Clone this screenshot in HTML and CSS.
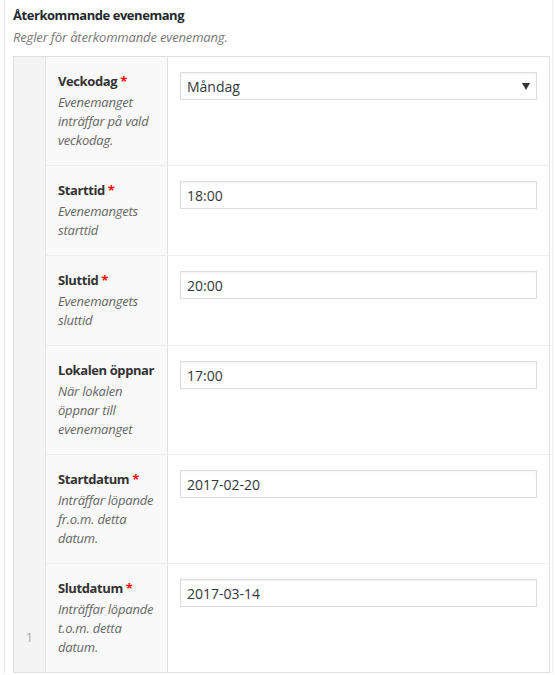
FILE: index.html
```html
<!DOCTYPE html>
<html lang="sv">
<head>
    <meta charset="UTF-8">
    <meta name="viewport" content="width=device-width, initial-scale=1.0">
    <title>Återkommande evenemang</title>
    <link rel="stylesheet" href="styles.css">
</head>
<body>
    <div class="panel">
        <h3 class="panel-title">Återkommande evenemang</h3>
        <p class="panel-desc">Regler för återkommande evenemang.</p>

        <div class="repeater">
            <div class="row-order">1</div>
            <div class="row-fields">
                <div class="field">
                    <div class="field-label">
                        <label>Veckodag <span class="required">*</span></label>
                        <p class="field-desc">Evenemanget inträffar på vald veckodag.</p>
                    </div>
                    <div class="field-input">
                        <div class="select-box">
                            <select>
                                <option>Måndag</option>
                                <option>Tisdag</option>
                                <option>Onsdag</option>
                                <option>Torsdag</option>
                                <option>Fredag</option>
                                <option>Lördag</option>
                                <option>Söndag</option>
                            </select>
                            <span class="caret"></span>
                        </div>
                    </div>
                </div>

                <div class="field">
                    <div class="field-label">
                        <label>Starttid <span class="required">*</span></label>
                        <p class="field-desc">Evenemangets starttid</p>
                    </div>
                    <div class="field-input">
                        <input type="text" value="18:00">
                    </div>
                </div>

                <div class="field">
                    <div class="field-label">
                        <label>Sluttid <span class="required">*</span></label>
                        <p class="field-desc">Evenemangets sluttid</p>
                    </div>
                    <div class="field-input">
                        <input type="text" value="20:00">
                    </div>
                </div>

                <div class="field">
                    <div class="field-label">
                        <label>Lokalen öppnar</label>
                        <p class="field-desc">När lokalen öppnar till evenemanget</p>
                    </div>
                    <div class="field-input">
                        <input type="text" value="17:00">
                    </div>
                </div>

                <div class="field">
                    <div class="field-label">
                        <label>Startdatum <span class="required">*</span></label>
                        <p class="field-desc">Inträffar löpande fr.o.m. detta datum.</p>
                    </div>
                    <div class="field-input">
                        <input type="text" value="2017-02-20">
                    </div>
                </div>

                <div class="field">
                    <div class="field-label">
                        <label>Slutdatum <span class="required">*</span></label>
                        <p class="field-desc">Inträffar löpande t.o.m. detta datum.</p>
                    </div>
                    <div class="field-input">
                        <input type="text" value="2017-03-14">
                    </div>
                </div>
            </div>
        </div>
    </div>
</body>
</html>
```

FILE: styles.css
```css
body {
    margin: 0;
    background-color: #fff;
    font-family: 'Open Sans', 'Liberation Sans', sans-serif;
    font-size: 13px;
    color: #444;
}
.panel {
    margin-left: 4px;
    width: 537px;
    padding: 6px 2px 0 8px;
    border-left: 1px solid #e5e5e5;
    border-right: 1px solid #eee;
}
.panel-title {
    margin: 0;
    font-size: 13px;
    line-height: 18px;
    font-weight: 700;
    letter-spacing: -0.45px;
    color: #23282d;
}
.panel-desc {
    margin: 4px 0 10px;
    line-height: 18px;
    font-style: italic;
    letter-spacing: -0.15px;
    color: #777;
}
.repeater {
    display: grid;
    grid-template-columns: 32px 1fr;
    border: 1px solid #dfdfdf;
}
.row-order {
    display: flex;
    align-items: flex-end;
    justify-content: center;
    padding-bottom: 26px;
    background-color: #f4f4f4;
    border-right: 1px solid #e1e1e1;
    color: #aaa;
    font-size: 13px;
    line-height: 18px;
}
.field {
    display: grid;
    grid-template-columns: 122px 1fr;
    border-top: 1px solid #eee;
}
.field:first-child {
    border-top: none;
}
.field-label {
    padding: 15px 10px 15px 12px;
    background-color: #f9f9f9;
    border-right: 1px solid #e1e1e1;
}
.field-label label {
    display: block;
    margin-bottom: 3px;
    font-weight: 700;
    line-height: 18px;
    letter-spacing: -0.4px;
    white-space: nowrap;
    color: #333;
}
.required {
    color: #f00;
}
.field-desc {
    margin: 0;
    font-style: italic;
    line-height: 19px;
    letter-spacing: -0.2px;
    color: #666;
}
.field-input {
    padding: 15px 12px;
}
.field-input input,
.select-box {
    box-sizing: border-box;
    width: 100%;
    height: 28px;
    margin: 0;
    border: 1px solid #ddd;
    box-shadow: inset 0 1px 2px rgba(0, 0, 0, 0.05);
    background-color: #fff;
    font-family: 'Open Sans', 'Liberation Sans', sans-serif;
    font-size: 14px;
    color: #32373c;
}
.field-input input {
    padding: 0 6px;
    outline: none;
}
.select-box {
    display: flex;
    align-items: center;
    padding: 0 6px 0 0;
}
.select-box select {
    flex: 1;
    height: 100%;
    padding: 0 6px;
    border: none;
    background: transparent;
    appearance: none;
    -webkit-appearance: none;
    font: inherit;
    color: inherit;
    outline: none;
}
.caret {
    width: 0;
    height: 0;
    border-left: 4px solid transparent;
    border-right: 4px solid transparent;
    border-top: 7px solid #333;
}
```
